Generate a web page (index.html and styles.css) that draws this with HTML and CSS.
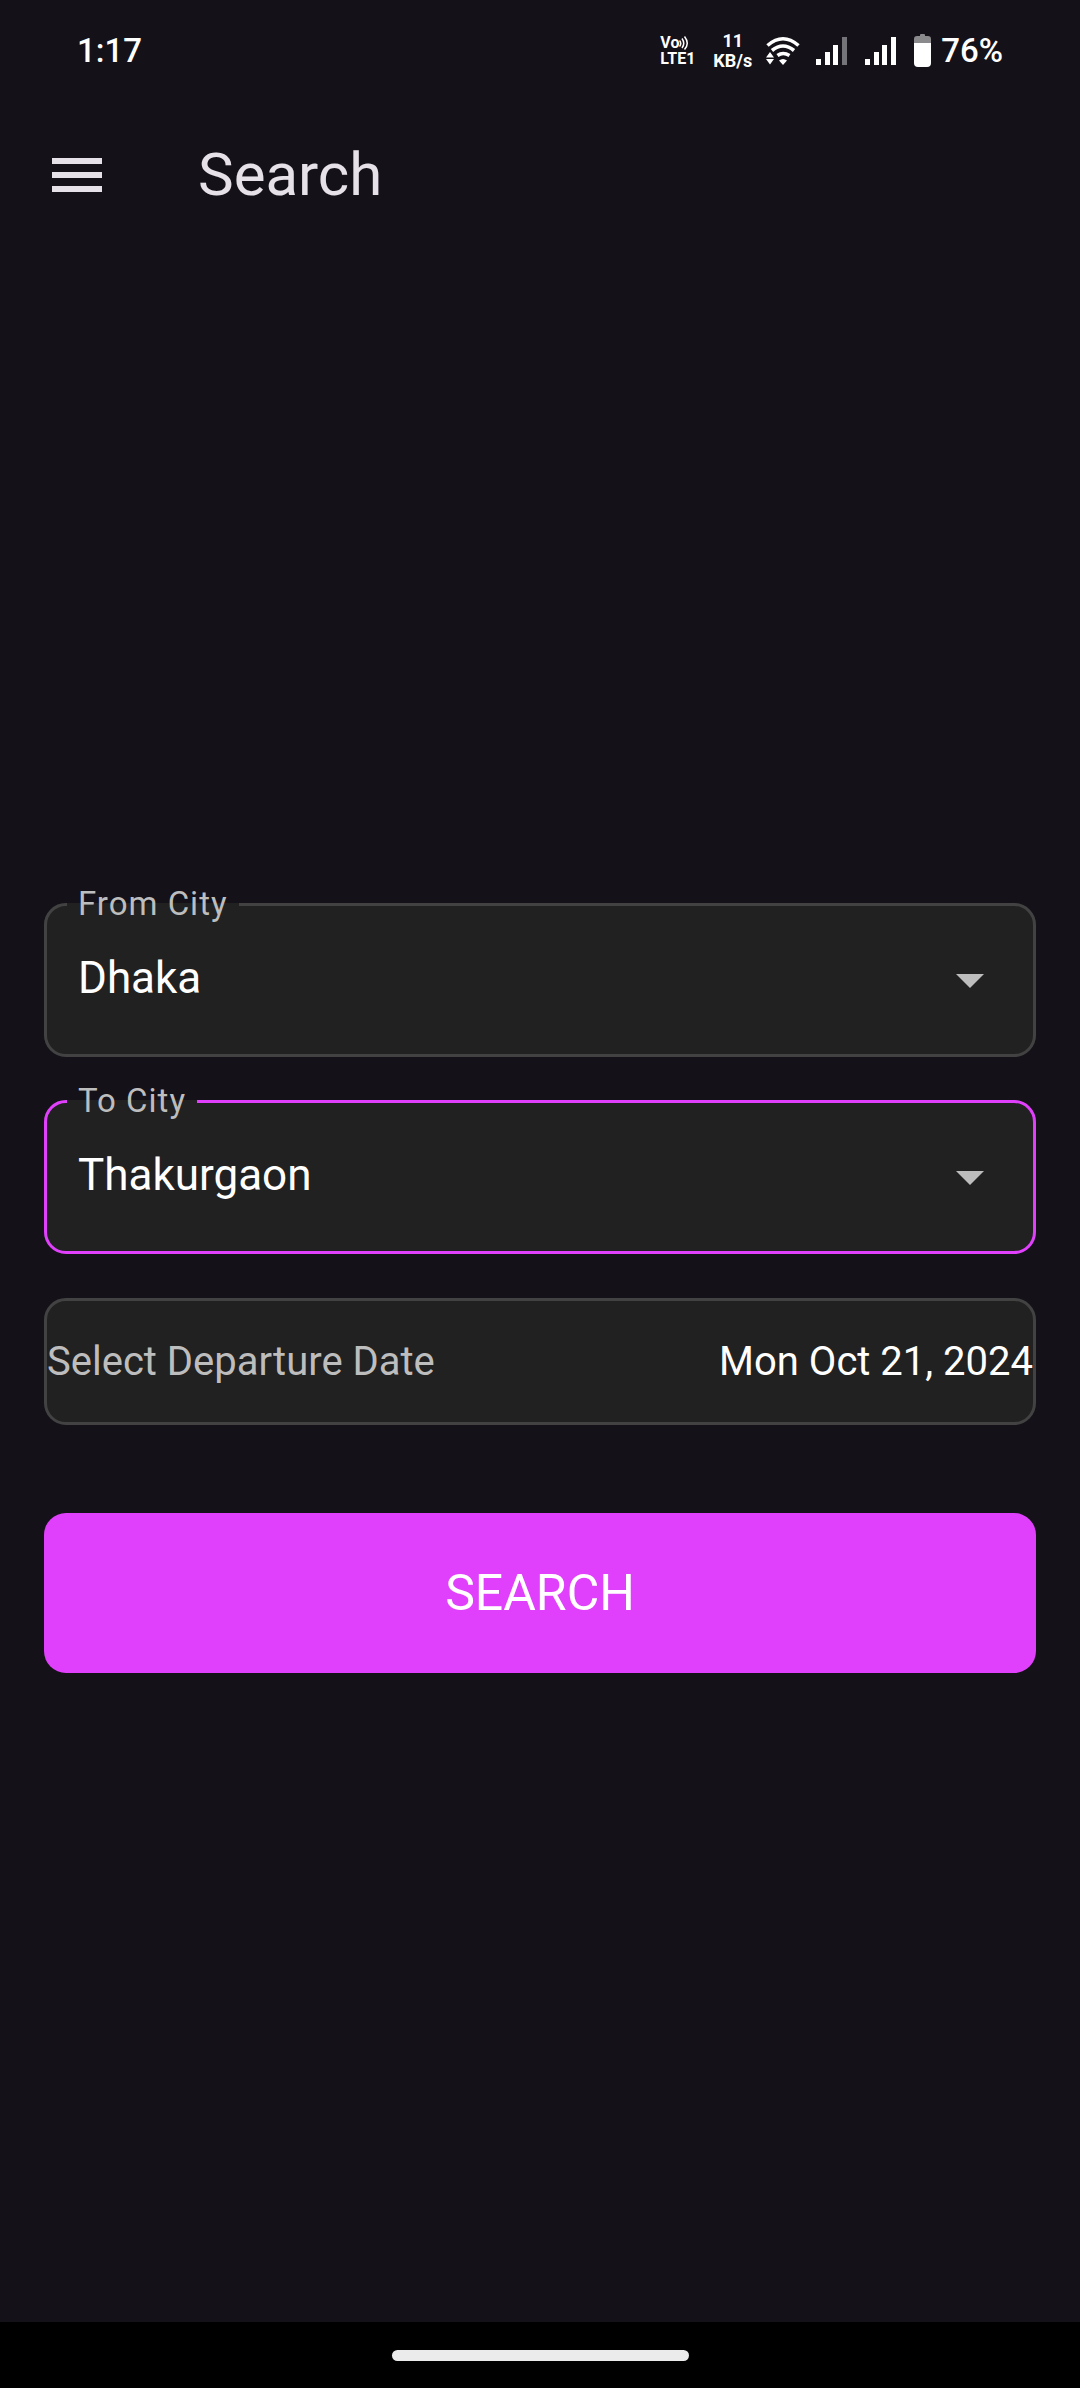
FILE: index.html
```html
<!DOCTYPE html>
<html lang="en">
<head>
<meta charset="utf-8">
<meta name="viewport" content="width=device-width, initial-scale=1">
<title>Search</title>
<link rel="stylesheet" href="styles.css">
</head>
<body>
<div class="screen">
  <div class="status-bar">
    <span class="status-text">1:17</span>
    <div class="status-icons">
      <div class="volte">
        <div class="volte-top"><span>Vo</span><svg width="10" height="14" viewBox="0 0 10 14" fill="none" stroke="#fff" stroke-width="1.500"><path d="M.5 4.500Q3 7.500 .5 10.500M3 2.500Q6.500 7.500 3 12M5.500 .5Q11 7.500 5.500 13.500"/></svg></div>
        <span>LTE1</span>
      </div>
      <div class="speed"><span>11</span><span>KB/s</span></div>
      <svg class="wifi" width="34" height="30" viewBox="0 0 34 30">
        <g fill="none" stroke="#fff" stroke-width="3.600">
          <path d="M1.500 9.500Q17-4 32.500 9.500"/>
          <path d="M6 14.500Q17 5.500 28 14.500"/>
          <path d="M11.500 19.500Q17 15.500 23.500 19.500"/>
        </g>
        <path fill="#fff" d="M4 16l4 5.500H0zM0 23h8l-4 5.500zM13 24.500Q17 21.500 21 24.500L17 29z"/>
      </svg>
      <svg class="signal" width="32" height="28" viewBox="0 0 32 28" fill="#fff"><path d="M0 22h5v6H0zM9 15h5v13H9zM17 8h5v20h-5z"/><path fill="#757478" d="M26 0h5v28h-5z"/></svg>
      <svg class="signal" width="32" height="28" viewBox="0 0 32 28" fill="#fff"><path d="M0 22h5v6H0zM9 15h5v13H9zM17 8h5v20h-5zM26 0h5v28h-5z"/></svg>
      <svg class="battery" width="17" height="33" viewBox="0 0 17 33"><path fill="#8a898c" d="M0 9V5q0-3 3-3h3V1q0-1 1-1h3q1 0 1 1v1h3q3 0 3 3v4z"/><path fill="#fff" d="M0 9h17v20q0 4-4 4H4q-4 0-4-4z"/></svg>
      <span class="status-text">76%</span>
    </div>
  </div>

  <header class="app-bar">
    <button class="menu-button" type="button" aria-label="Open menu">
      <svg width="50" height="34" viewBox="0 0 50 34" fill="#e6e0e9"><path d="M0 0h50v6H0zM0 14h50v6H0zM0 28h50v6H0z"/></svg>
    </button>
    <h1 class="title">Search</h1>
  </header>

  <main class="content">
    <form class="search-form">
      <fieldset class="field">
        <legend class="field-legend"><label for="from-city">From City</label></legend>
        <div class="field-control">
          <select class="field-select" id="from-city"><option>Dhaka</option><option>Thakurgaon</option></select>
          <svg class="field-arrow" width="28" height="14" viewBox="0 0 28 14"><path fill="#bdbdbd" d="M0 0h28L14 14z"/></svg>
        </div>
      </fieldset>
      <fieldset class="field field-active">
        <legend class="field-legend"><label for="to-city">To City</label></legend>
        <div class="field-control">
          <select class="field-select" id="to-city"><option>Thakurgaon</option><option>Dhaka</option></select>
          <svg class="field-arrow" width="28" height="14" viewBox="0 0 28 14"><path fill="#bdbdbd" d="M0 0h28L14 14z"/></svg>
        </div>
      </fieldset>
      <button class="date-button" type="button">
        <span class="date-label">Select Departure Date</span>
        <span>Mon Oct 21, 2024</span>
      </button>
      <button class="search-button" type="button">SEARCH</button>
    </form>
  </main>

  <footer class="nav-bar"><div class="nav-handle"></div></footer>
</div>
</body>
</html>
```
FILE: styles.css
```css
* {
  box-sizing: border-box;
}

body {
  margin: 0;
  background: #141118;
  color: #fff;
  font-family: Roboto, "Noto Sans", sans-serif;
}

button {
  border: 0;
  padding: 0;
  background: none;
  color: inherit;
  font: inherit;
}

svg {
  display: block;
  flex: none;
}

.screen {
  display: flex;
  flex-direction: column;
  min-height: 100vh;
}

/* System status bar */
.status-bar {
  display: flex;
  align-items: center;
  justify-content: space-between;
  height: 98px;
  padding: 3px 77px 0;
}

.status-text {
  font-size: 33px;
  font-weight: 500;
  line-height: 40px;
}

.status-icons {
  display: flex;
  align-items: center;
}

.volte {
  display: flex;
  flex-direction: column;
  margin-right: 18px;
  font-size: 16px;
  font-weight: 700;
  line-height: 16px;
}

.volte-top {
  display: flex;
  align-items: center;
}

.speed {
  display: flex;
  flex-direction: column;
  align-items: center;
  margin-right: 14px;
  font-size: 18px;
  font-weight: 700;
  line-height: 20px;
}

.wifi {
  margin-right: 16px;
}

.signal {
  margin-right: 17px;
}

.battery {
  margin-right: 10px;
}

/* App bar */
.app-bar {
  display: flex;
  align-items: center;
  gap: 96px;
  height: 154px;
  padding: 0 52px;
}

.title {
  margin: 0;
  color: #e6e0e9;
  font-size: 60px;
  font-weight: 400;
  line-height: 76px;
}

/* Search form */
.content {
  display: flex;
  flex: 1;
  flex-direction: column;
  justify-content: center;
  padding: 0 44px 17px;
}

.search-form {
  display: flex;
  flex-direction: column;
}

.field {
  min-width: 0;
  margin: 0 0 24px;
  padding: 0;
  border: 3px solid #424242;
  border-radius: 22px;
  background: #212121;
}

.field-active {
  margin-bottom: 44px;
  border-color: #e040fb;
}

.field-legend {
  margin-left: 20px;
  padding: 0 11px;
  color: #bdbdbd;
  font-size: 33px;
  letter-spacing: 1px;
  line-height: 40px;
}

.field-control {
  display: grid;
  align-items: center;
}

.field-select {
  grid-area: 1 / 1;
  width: 100%;
  height: 130px;
  padding: 0 100px 22px 31px;
  border: 0;
  border-radius: 19px;
  outline: 0;
  appearance: none;
  background: none;
  color: #fff;
  font: inherit;
  font-size: 44px;
}

.field-arrow {
  grid-area: 1 / 1;
  justify-self: end;
  margin: 0 49px 16px 0;
  pointer-events: none;
}

.date-button {
  display: flex;
  align-items: center;
  justify-content: space-between;
  height: 127px;
  margin-bottom: 88px;
  border: 3px solid #424242;
  border-radius: 22px;
  background: #212121;
  font-size: 40px;
}

.date-label {
  color: #bdbdbd;
}

.search-button {
  height: 160px;
  border-radius: 22px;
  background: #e040fb;
  font-size: 50px;
}

/* System navigation bar */
.nav-bar {
  display: flex;
  align-items: center;
  justify-content: center;
  height: 66px;
  background: #000;
}

.nav-handle {
  width: 297px;
  height: 11px;
  border-radius: 6px;
  background: #ebebeb;
}
```
